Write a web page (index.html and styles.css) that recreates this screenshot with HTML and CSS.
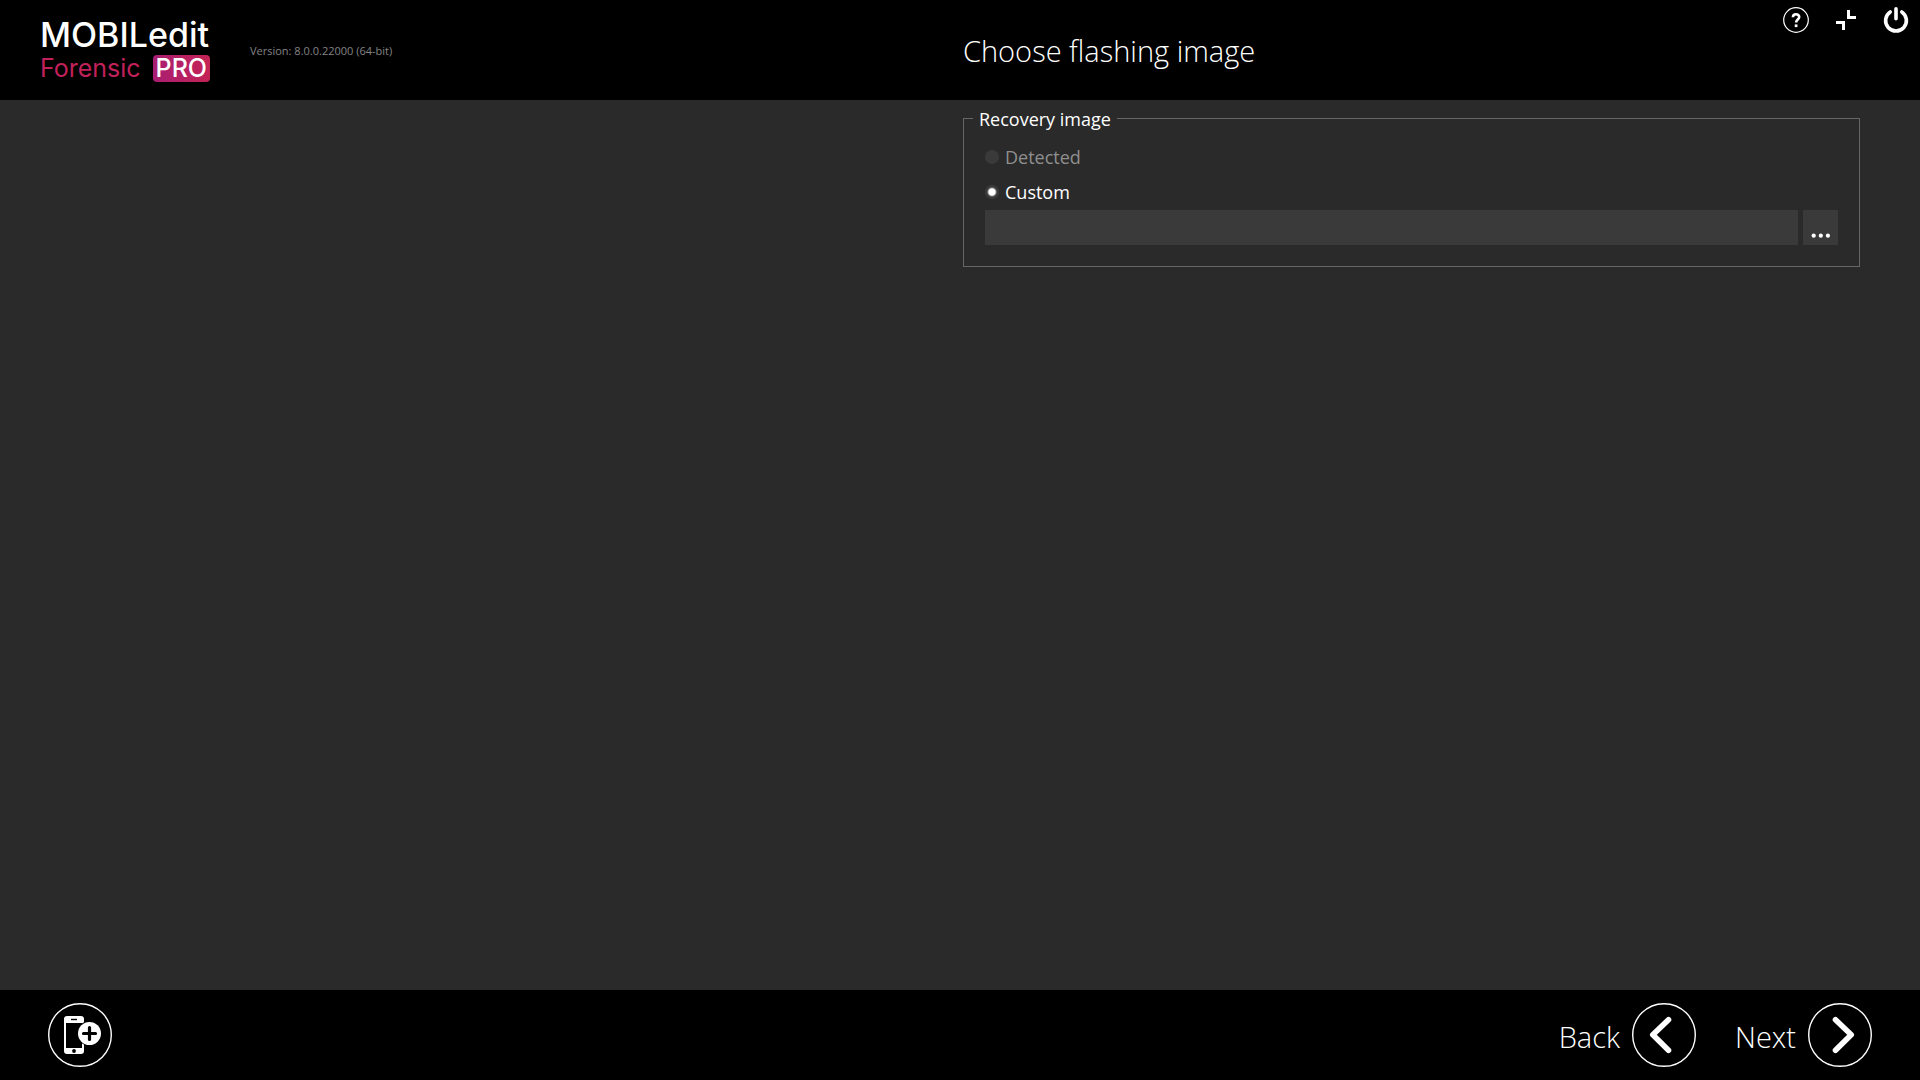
FILE: index.html
```html
<!DOCTYPE html>
<html lang="en">
<head>
    <meta charset="UTF-8">
    <meta name="viewport" content="width=device-width, initial-scale=1.0">
    <title>MOBILedit Forensic PRO</title>
    <link rel="stylesheet" href="styles.css">
</head>
<body>
<header class="header columns">
    <div class="brand">
        <div class="logo">
            <span class="logo-name">MOBILedit</span>
            <div class="logo-edition">
                <span>Forensic</span>
                <span class="logo-pro">PRO</span>
            </div>
        </div>
        <span class="version">Version: 8.0.0.22000 (64-bit)</span>
    </div>
    <div class="heading">
        <h1>Choose flashing image</h1>
        <div class="window-buttons">
            <button type="button" class="icon-button" aria-label="Help">
                <svg viewBox="0 0 26 26" width="26" height="26" fill="none" stroke="#fff">
                    <circle cx="13" cy="13" r="12.3" stroke-width="1.2"/>
                    <path d="M9.9 10.2C9.9 6.2 16.2 6.3 16.2 10c0 2.6-3.1 2.6-3.1 5.6" stroke-width="2.6"/>
                    <path d="M13.1 17.4v2.7" stroke-width="2.7"/>
                </svg>
            </button>
            <button type="button" class="icon-button" aria-label="Exit full screen">
                <svg viewBox="0 0 26 26" width="26" height="26" fill="none" stroke="#fff" stroke-width="3">
                    <path d="M15.5 3v7.5H23M3 15.5h7.5V23"/>
                </svg>
            </button>
            <button type="button" class="icon-button" aria-label="Exit">
                <svg viewBox="0 0 26 26" width="26" height="26" fill="none" stroke="#fff" stroke-width="3.6" stroke-linecap="round">
                    <path d="M13 1.8v10M7.2 5a10.4 10.4 0 1 0 11.6 0"/>
                </svg>
            </button>
        </div>
    </div>
</header>

<main class="content columns">
    <form class="image-form">
        <fieldset>
            <legend>Recovery image</legend>
            <label class="option disabled" for="detected">
                <input type="radio" id="detected" name="image" disabled>
                Detected
            </label>
            <label class="option" for="custom">
                <input type="radio" id="custom" name="image" checked>
                Custom
            </label>
            <div class="file-row">
                <input type="text" class="file-path" aria-label="Custom image path">
                <button type="button" class="browse" aria-label="Browse">
                    <svg viewBox="0 0 35 35" width="35" height="35" fill="#fff">
                        <circle cx="10.7" cy="25.7" r="2.1"/>
                        <circle cx="17.8" cy="25.7" r="2.1"/>
                        <circle cx="24.9" cy="25.7" r="2.1"/>
                    </svg>
                </button>
            </div>
        </fieldset>
    </form>
</main>

<footer class="footer">
    <button type="button" class="nav-button" aria-label="Add phone">
        <svg viewBox="0 0 64 64" width="64" height="64">
            <circle cx="32" cy="32" r="31.3" fill="none" stroke="#fff" stroke-width="1.4"/>
            <rect x="16" y="13" width="20" height="38" rx="3" fill="#fff"/>
            <path d="M18 20h16v25H18z"/>
            <path d="M23 16.5h6" stroke="#000" stroke-width="1.4"/>
            <circle cx="26" cy="48" r="1.9"/>
            <circle cx="41.5" cy="30.5" r="12.5"/>
            <circle cx="41.5" cy="30.5" r="11.5" fill="#fff"/>
            <path d="M41.5 24.5v12M35.5 30.5h12" stroke="#000" stroke-width="3.2" stroke-linecap="round"/>
        </svg>
    </button>
    <nav class="steps">
        <button type="button" class="nav-button">
            <span class="nav-label">Back</span>
            <svg viewBox="0 0 64 64" width="64" height="64" fill="none" stroke="#fff">
                <circle cx="32" cy="32" r="31.3" stroke-width="1.4"/>
                <path d="M36.5 16.8L20.8 31.8L36.5 47.2" stroke-width="5.6" stroke-linecap="round" stroke-linejoin="round"/>
            </svg>
        </button>
        <button type="button" class="nav-button">
            <span class="nav-label">Next</span>
            <svg viewBox="0 0 64 64" width="64" height="64" fill="none" stroke="#fff">
                <circle cx="32" cy="32" r="31.3" stroke-width="1.4"/>
                <path d="M27.5 16.8L43.2 31.8L27.5 47.2" stroke-width="5.6" stroke-linecap="round" stroke-linejoin="round"/>
            </svg>
        </button>
    </nav>
</footer>
</body>
</html>
```
FILE: styles.css
```css
* {
    box-sizing: border-box;
}

body {
    display: flex;
    flex-direction: column;
    min-height: 100vh;
    margin: 0;
    font-family: "Open Sans", "Noto Sans", sans-serif;
    font-size: 18px;
    background: #2a2a2a;
    color: #fff;
}

button {
    padding: 0;
    border: none;
    background: none;
    color: inherit;
    font: inherit;
    cursor: pointer;
}

svg {
    display: block;
}

.columns {
    display: grid;
    grid-template-columns: calc(50% + 3px) 1fr;
}

.header {
    height: 100px;
    padding-top: 2px;
    background: #000;
}

.brand {
    display: flex;
    align-items: center;
    gap: 40px;
    padding-left: 40px;
}

.logo {
    display: flex;
    flex-direction: column;
    width: 170px;
    margin-bottom: 6px;
    font-family: Inter, sans-serif;
    white-space: nowrap;
}

.logo-name {
    font-size: 34px;
    font-weight: 500;
    line-height: 41px;
}

.logo-edition {
    display: flex;
    justify-content: space-between;
    font-size: 25px;
    line-height: 27px;
    color: #c2215a;
}

.logo-pro {
    padding: 0 3px;
    border-radius: 4px;
    background: linear-gradient(90deg, #a81e72, #c42355);
    color: #fff;
    font-weight: 500;
}

.version {
    font-size: 11px;
    line-height: 16px;
    color: #838383;
}

.heading {
    display: flex;
    align-items: flex-start;
    justify-content: space-between;
}

h1 {
    margin: 0;
    font-size: 29px;
    line-height: 98px;
    font-weight: 300;
}

.window-buttons {
    display: flex;
    gap: 24px;
    padding: 5px 11px 0 0;
}

.content {
    flex: 1;
}

.image-form {
    grid-column: 2;
    padding: 4px 60px 0 0;
}

fieldset {
    display: flex;
    flex-direction: column;
    margin: 0;
    padding: 7px 21px 21px;
    border: 1px solid #666;
}

legend {
    margin-left: -12px;
    padding: 2px 6px 0;
    line-height: 26px;
}

.option {
    display: flex;
    align-items: center;
    gap: 6px;
    height: 35px;
}

.option.disabled {
    color: #8f8f8f;
}

.option input {
    appearance: none;
    width: 14px;
    height: 14px;
    margin: 0;
    border-radius: 50%;
    background: #3a3a3a;
}

.option input:checked {
    background: radial-gradient(circle, #fff 3px, #3a3a3a 5px);
}

.file-row {
    display: flex;
    gap: 5px;
    margin-top: 1px;
}

.file-path {
    flex: 1;
    height: 35px;
    padding: 0 8px;
    border: none;
    background: #3a3a3a;
    color: #fff;
    font: inherit;
}

.browse {
    background: #3a3a3a;
}

.footer {
    display: flex;
    align-items: center;
    justify-content: space-between;
    height: 90px;
    padding: 0 48px;
    background: #000;
}

.steps {
    display: flex;
    gap: 39px;
}

.nav-button {
    display: flex;
    align-items: center;
    gap: 12px;
}

.nav-label {
    padding-top: 2px;
    font-size: 29px;
    font-weight: 300;
}
```
